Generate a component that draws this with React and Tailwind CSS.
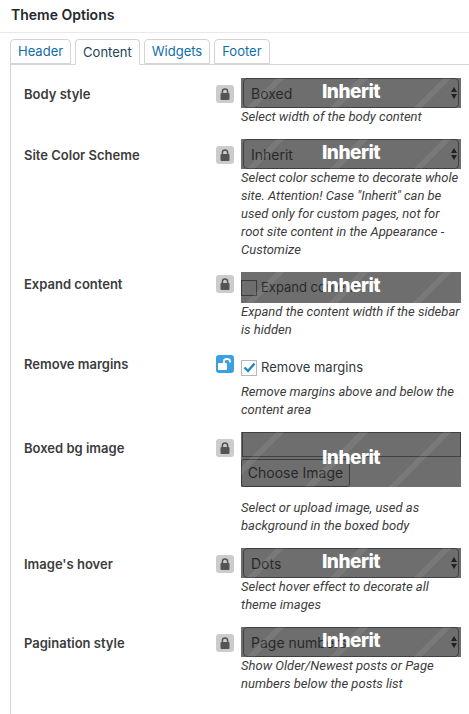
import React from "react";

const font = "font-['Inter','Roboto',sans-serif]";

const LockIcon = ({ open }) =>
  open ? (
    <svg width="14" height="12" viewBox="0 0 14 12" fill="none">
      <rect x="0" y="5" width="9" height="7" rx="1" fill="#fff" />
      <path d="M6 5V3.2C6 1.8 7.2 1 8.8 1S12 1.8 12 3.2V4.5" stroke="#fff" strokeWidth="1.8" />
    </svg>
  ) : (
    <svg width="10" height="12" viewBox="0 0 10 12" fill="none">
      <rect x="0.5" y="5" width="9" height="7" rx="1" fill="#555" />
      <path d="M2.4 5.5V3.4C2.4 1.9 3.5 1 5 1S7.6 1.9 7.6 3.4V5.5" stroke="#555" strokeWidth="1.5" />
    </svg>
  );

const Overlay = () => (
  <div className="absolute inset-0 flex items-center justify-center bg-[#313131]/70 bg-[repeating-linear-gradient(135deg,transparent_0,transparent_25px,rgba(255,255,255,0.08)_25px,rgba(255,255,255,0.08)_31px,transparent_31px,transparent_59px)] pb-[2px]">
    <span className="text-[19px] font-extrabold tracking-[-0.5px] text-white">Inherit</span>
  </div>
);

const Select = ({ value }) => (
  <div className="relative h-[30px] w-[220px] shrink-0">
    <div className="mx-[2px] flex h-full items-center justify-between rounded-[4px] border border-[#666] pl-[7px] pr-[1px] text-[14px] text-[#111]">
      <span>{value}</span>
      <span className="flex flex-col gap-[2px]">
        <span className="h-0 w-0 border-x-[3.5px] border-b-[5px] border-x-transparent border-b-black" />
        <span className="h-0 w-0 border-x-[3.5px] border-t-[5px] border-x-transparent border-t-black" />
      </span>
    </div>
    <Overlay />
  </div>
);

const Row = ({ label, desc, open, top = "pt-[7px]", children }) => (
  <div className="flex pb-[13px]">
    <div className={`${top} w-[205px] shrink-0 pl-[13px] text-[13px] font-semibold leading-[18px] text-[#3c3c3c]`}>{label}</div>
    <div className={`${top} w-[18px] shrink-0`}>
      <div className={`flex h-[18px] w-[18px] items-center justify-center rounded-[3px] ${open ? "bg-[#3b9fe0]" : "bg-[#cccccc]"}`}>
        <LockIcon open={open} />
      </div>
    </div>
    <div className="ml-[7px] w-[220px] shrink-0">
      {children}
      <div className="font-['Roboto',sans-serif] text-[13px] italic leading-[18px] text-[#3c3c3c]">{desc}</div>
    </div>
  </div>
);

const Tab = ({ active, children }) => (
  <div className={`rounded-t-[4px] border border-[#d4d4d4] px-[7px] text-[13px] ${active ? "-mb-px h-[26px] border-b-white bg-white pt-[3px] text-[#23445c]" : "h-[25px] bg-white pt-[2px] text-[#0f6ea8]"}`}>
    {children}
  </div>
);

export default function App() {
  return (
    <div className={`h-[714px] w-[469px] overflow-hidden bg-white ${font}`}>
      <div className="h-[33px] border-b border-[#e8e8e8] pl-[11px] pt-[5px] text-[14px] font-semibold leading-[20px] text-[#23282d]">
        Theme Options
      </div>
      <div className="relative flex items-end gap-[4px] pl-[10px] pt-[6px]">
        <Tab>Header</Tab>
        <Tab active>Content</Tab>
        <Tab>Widgets</Tab>
        <Tab>Footer</Tab>
      </div>
      <div className="ml-[10px] h-[660px] w-[480px] border border-[#d4d4d4] pt-[13px]">
        <Row label="Body style" desc="Select width of the body content">
          <Select value="Boxed" />
        </Row>
        <Row
          label="Site Color Scheme"
          desc={'Select color scheme to decorate whole site. Attention! Case "Inherit" can be used only for custom pages, not for root site content in the Appearance - Customize'}
        >
          <Select value="Inherit" />
        </Row>
        <Row label="Expand content" desc="Expand the content width if the sidebar is hidden" top="pt-[3px]">
          <div className="relative flex h-[31px] items-center gap-[4px] text-[13px] text-[#111]">
            <span className="h-[16px] w-[16px] border border-[#555]" />
            <span>Expand content</span>
            <Overlay />
          </div>
        </Row>
        <Row label="Remove margins" desc="Remove margins above and below the content area" open top="pt-[3px]">
          <div className="flex h-[31px] items-center gap-[4px] text-[13px] text-[#32373c]">
            <span className="flex h-[16px] w-[16px] items-center justify-center border border-[#b4b9be] bg-white">
              <svg width="13" height="11" viewBox="0 0 13 11" fill="none">
                <path d="M1.5 5.5L5 9L11.5 1.5" stroke="#1e8cbe" strokeWidth="2.4" />
              </svg>
            </span>
            <span>Remove margins</span>
          </div>
        </Row>
        <Row label="Boxed bg image" desc="Select or upload image, used as background in the boxed body">
          <div className="relative mb-[12px] h-[55px]">
            <div className="ml-[1px] h-[25px] border border-[#666]" />
            <div className="mt-[2px] h-[28px] w-[109px] rounded-[3px] border border-[#555] text-center text-[14px] leading-[26px] text-[#111]">
              Choose Image
            </div>
            <Overlay />
          </div>
        </Row>
        <Row label="Image's hover" desc="Select hover effect to decorate all theme images">
          <Select value="Dots" />
        </Row>
        <Row label="Pagination style" desc="Show Older/Newest posts or Page numbers below the posts list">
          <Select value="Page numbers" />
        </Row>
      </div>
    </div>
  );
}
